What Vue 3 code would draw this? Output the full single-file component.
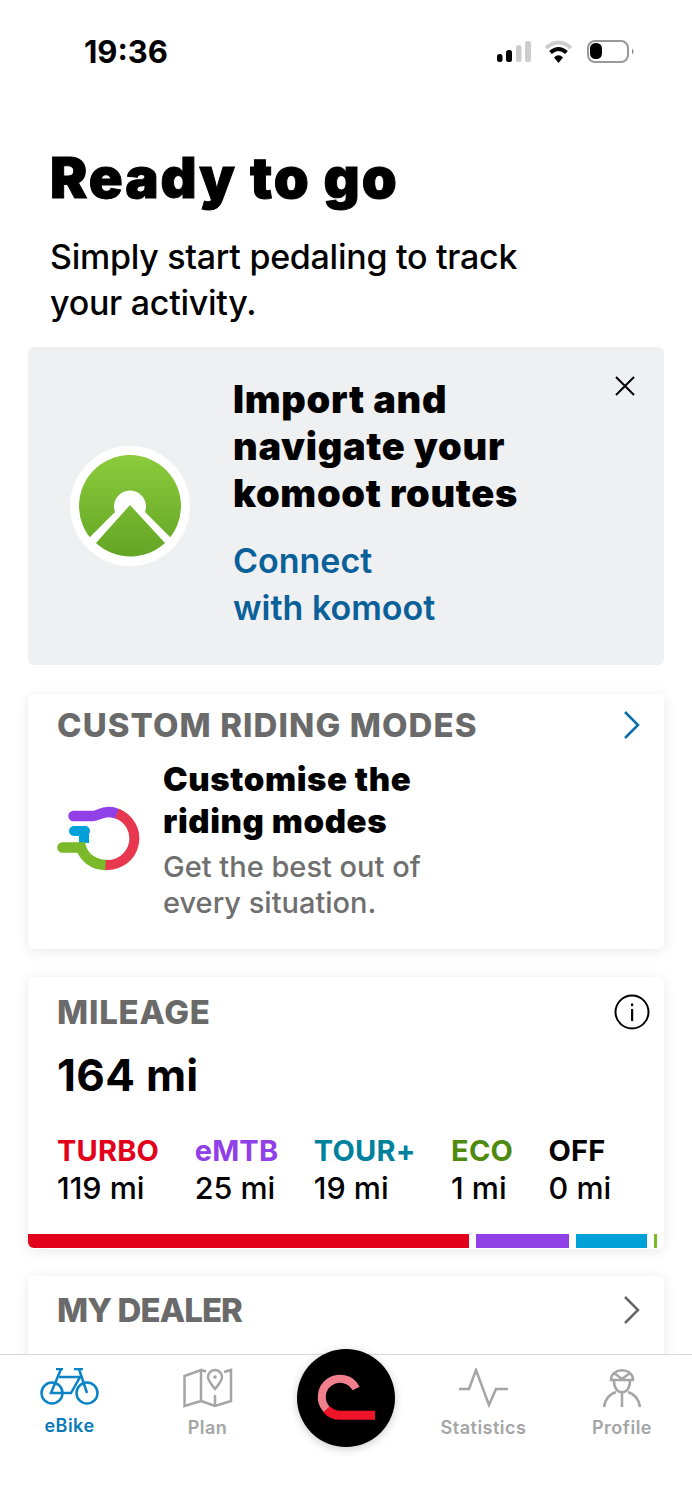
<script setup>
const modes = [
  { name: 'TURBO', value: '119 mi', color: '#e2001a' },
  { name: 'eMTB', value: '25 mi', color: '#9140e8' },
  { name: 'TOUR+', value: '19 mi', color: '#00829e' },
  { name: 'ECO', value: '1 mi', color: '#4f8a10' },
  { name: 'OFF', value: '0 mi', color: '#000' }
]
</script>

<template>
  <div class="page">
    <div class="status">
      <span class="time">19:36</span>
      <svg class="status-icons" width="140" height="28" viewBox="0 0 140 28">
        <rect x="1" y="16" width="5.500" height="8" rx="2.500" fill="#000" />
        <rect x="10" y="12" width="6" height="12" rx="2.500" fill="#000" />
        <rect x="20" y="7" width="5.500" height="17" rx="2.500" fill="#ccc" />
        <rect x="29" y="3" width="6" height="21" rx="2.500" fill="#ccc" />
        <path d="M50 10 Q62.500 -1 75 10" fill="none" stroke="#ccc" stroke-width="4" />
        <path d="M54.500 14.500 Q62.500 7.500 70.500 14.500" fill="none" stroke="#000" stroke-width="4" />
        <path d="M58 19.500 Q62.500 15 67 19.500 L62.500 25 Z" fill="#000" />
        <rect x="92" y="3" width="40" height="21" rx="7" fill="none" stroke="#999" stroke-width="2" />
        <rect x="94" y="5" width="12" height="16" rx="5.500" fill="#000" />
        <path d="M136 10.500 Q139 13.500 136 16.500 Z" fill="#888" />
      </svg>
    </div>

    <div class="scroll">
      <h1>Ready to go</h1>
      <p class="lead">Simply start pedaling to track<br>your activity.</p>

      <section class="komoot">
        <svg class="komoot-logo" width="120" height="120" viewBox="0 0 120 120">
          <defs>
            <linearGradient id="kg" gradientUnits="userSpaceOnUse" x1="0" y1="9" x2="0" y2="111">
              <stop offset="0" stop-color="#8ccb3c" />
              <stop offset="1" stop-color="#63a524" />
            </linearGradient>
          </defs>
          <circle cx="60" cy="60" r="60" fill="#fff" />
          <circle cx="60" cy="60" r="51" fill="url(#kg)" />
          <path d="M14 97 L45 66 A16 16 0 1 1 75 66 L106 97 L60 119 Z" fill="#fff" />
          <path d="M26 97 L60 59 L95 97 A51 51 0 0 1 26 97 Z" fill="url(#kg)" />
        </svg>
        <div class="komoot-text">
          <h2>Import and<br>navigate your<br>komoot routes</h2>
          <a class="connect">Connect<br>with komoot</a>
        </div>
        <svg class="close" width="22" height="22" viewBox="0 0 22 22">
          <path d="M2 2 L20 20 M20 2 L2 20" stroke="#000" stroke-width="2" />
        </svg>
      </section>

      <section class="card custom">
        <div class="card-head">
          <span class="label">CUSTOM RIDING MODES</span>
          <svg width="18" height="28" viewBox="0 0 18 28">
            <path d="M2 1 L15 14 L2 27" fill="none" stroke="#0a6fa8" stroke-width="2.500" />
          </svg>
        </div>
        <div class="custom-body">
          <svg class="modes-logo" width="84" height="70" viewBox="0 0 84 70" fill="none">
            <path d="M17 26 H28" stroke="#00a0d8" stroke-width="10" stroke-linecap="round" />
            <path d="M27 26 V38" stroke="#00a0d8" stroke-width="10" />
            <path d="M5.500 42.500 H24 C27 52 36 60 49 60" stroke="#7ab929" stroke-width="10.500" stroke-linecap="round" />
            <path d="M16.500 11 H36 C41 11 44 7 51.500 7 Q56 7 61 9" stroke="#9140e8" stroke-width="10.500" stroke-linecap="round" />
            <path d="M59.900 8.500 A26.500 26.500 0 0 1 48.600 59.800" stroke="#e8384f" stroke-width="10" />
          </svg>
          <div>
            <h3>Customise the<br>riding modes</h3>
            <p class="muted">Get the best out of<br>every situation.</p>
          </div>
        </div>
      </section>

      <section class="card mileage">
        <div class="card-head">
          <span class="label">MILEAGE</span>
          <svg width="36" height="36" viewBox="0 0 36 36">
            <circle cx="18" cy="18" r="16.500" fill="none" stroke="#000" stroke-width="2" />
            <rect x="17" y="15" width="2.200" height="12" fill="#000" />
            <rect x="17" y="9.500" width="2.200" height="2.600" fill="#000" />
          </svg>
        </div>
        <div class="total">164 mi</div>
        <div class="modes">
          <div v-for="m in modes" :key="m.name" class="mode">
            <span class="mode-name" :style="{ color: m.color }">{{ m.name }}</span>
            <span class="mode-value">{{ m.value }}</span>
          </div>
        </div>
        <div class="bar">
          <span class="seg red"></span>
          <span class="seg purple"></span>
          <span class="seg blue"></span>
          <span class="seg green"></span>
        </div>
      </section>

      <section class="card dealer">
        <div class="card-head">
          <span class="label">MY DEALER</span>
          <svg width="18" height="28" viewBox="0 0 18 28">
            <path d="M2 1 L15 14 L2 27" fill="none" stroke="#666" stroke-width="2.500" />
          </svg>
        </div>
      </section>
    </div>

    <nav class="tabs">
      <div class="tab active">
        <svg width="60" height="38" viewBox="0 0 60 38" fill="none" stroke="#0a84c6" stroke-width="2.500">
          <circle cx="12" cy="25" r="10.500" />
          <circle cx="47" cy="25" r="10.500" />
          <path d="M16 1 H23 M34 1 H43 M21 1 L11 25 H31 L40 9 H19 M39 1 L47 25" />
        </svg>
        <span>eBike</span>
      </div>
      <div class="tab">
        <svg width="50" height="40" viewBox="0 0 50 40" fill="none" stroke="#a5a5a5" stroke-width="2.500">
          <path d="M1.500 8 L18 2 V33 L1.500 38 Z M18 2 L23 3.500 M18 33 L32 38 L48 33 V2 L41 4 M32 27 V38" />
          <path d="M32 21 C27 15 25 12 25 9 A7 7 0 0 1 39 9 C39 12 37 15 32 21 Z" />
          <circle cx="32" cy="9" r="1.800" fill="#a5a5a5" stroke="none" />
        </svg>
        <span>Plan</span>
      </div>
      <div class="tab spacer"></div>
      <div class="tab">
        <svg width="50" height="40" viewBox="0 0 50 40" fill="none" stroke="#a5a5a5" stroke-width="2.500">
          <path d="M0 21 H10 L17 2 L30 37 L37 21 H49" />
        </svg>
        <span>Statistics</span>
      </div>
      <div class="tab">
        <svg width="38" height="40" viewBox="0 0 38 40" fill="none" stroke="#a5a5a5" stroke-width="2.500">
          <path d="M8 12 C8 -1 30 -1 30 12 Z M11 5 L19 11 L27 5" />
          <path d="M11 13 C11 28 27 28 27 13" />
          <path d="M1 39 C2 31 7 26 13 24 M37 39 C36 31 31 26 25 24 M19 25 V39" />
        </svg>
        <span>Profile</span>
      </div>
      <button class="fab" aria-label="Start">
        <svg width="98" height="98" viewBox="0 0 98 98" fill="none">
          <path d="M59.100 39.500 A18.200 18.200 0 1 0 29.700 60.400" stroke="#f2808c" stroke-width="8" />
          <path d="M29.700 60.400 A18.200 18.200 0 0 0 43 66.300 H78" stroke="#f01428" stroke-width="9" />
        </svg>
      </button>
    </nav>
  </div>
</template>

<style scoped>
.page {
  width: 692px;
  height: 1500px;
  display: flex;
  flex-direction: column;
  overflow: hidden;
  background: #fff;
  color: #000;
  font-family: Inter, "Liberation Sans", sans-serif;
}
.status {
  flex: none;
  height: 94px;
  padding: 0 56px 0 84px;
  display: flex;
  justify-content: space-between;
  align-items: flex-start;
}
.time {
  margin-top: 34px;
  font-size: 31px;
  line-height: 36px;
  font-weight: 700;
}
.status-icons {
  margin-top: 38px;
}
.scroll {
  flex: 1;
  min-height: 0;
  overflow: hidden;
}
h1 {
  margin: 50px 0 0 50px;
  font-size: 56px;
  line-height: 68px;
  font-weight: 900;
  letter-spacing: 1.900px;
  -webkit-text-stroke: 1px #000;
}
.lead {
  margin: 22px 0 0 50px;
  font-size: 34px;
  line-height: 46px;
  font-weight: 500;
  letter-spacing: -0.270px;
}
.komoot {
  position: relative;
  margin: 21px 28px 0;
  height: 318px;
  background: #eff0f2;
  border-radius: 6px;
  display: flex;
  align-items: center;
  padding-left: 42px;
  box-sizing: border-box;
}
.komoot-logo {
  flex: none;
}
.komoot-text {
  margin: 0 0 6px 43px;
}
h2 {
  margin: 0;
  font-size: 38px;
  line-height: 47px;
  font-weight: 900;
  letter-spacing: 0.700px;
}
.connect {
  display: block;
  margin-top: 20px;
  font-size: 34px;
  line-height: 47px;
  font-weight: 600;
  color: #0a6098;
}
.close {
  position: absolute;
  top: 28px;
  right: 28px;
}
.card {
  margin: 28px 28px 0;
  background: #fff;
  border-radius: 6px;
  box-shadow: 0 2px 14px rgba(0, 0, 0, 0.09);
}
.card-head {
  display: flex;
  justify-content: space-between;
  align-items: center;
  padding: 12px 23px 0 29px;
}
.label {
  font-size: 33px;
  line-height: 38px;
  font-weight: 800;
  letter-spacing: 0.800px;
  color: #6a6a6a;
}
.custom {
  margin-top: 29px;
  height: 255px;
}
.custom .label {
  letter-spacing: 1.100px;
}
.custom-body {
  display: flex;
  align-items: flex-start;
  padding-left: 29px;
}
.modes-logo {
  flex: none;
  margin: 61px 22px 0 0;
}
h3 {
  margin: 14px 0 0;
  font-size: 33px;
  line-height: 42px;
  font-weight: 900;
  letter-spacing: 0.600px;
}
.muted {
  margin: 7px 0 0;
  font-size: 29px;
  line-height: 36px;
  color: #6f6f6f;
  font-weight: 500;
}
.mileage {
  height: 272px;
  position: relative;
  overflow: hidden;
}
.mileage .card-head {
  padding-top: 16px;
  padding-right: 14px;
}
.total {
  padding-left: 29px;
  margin-top: 17px;
  font-size: 44px;
  line-height: 54px;
  font-weight: 700;
  letter-spacing: 0.300px;
}
.modes {
  display: flex;
  gap: 35.500px;
  padding-left: 29px;
  margin-top: 30px;
}
.mode {
  display: flex;
  flex-direction: column;
  font-size: 30.500px;
  line-height: 37px;
}
.mode-name {
  font-size: 29px;
  font-weight: 700;
  letter-spacing: 0.200px;
}
.mode-value {
  font-weight: 500;
}
.bar {
  position: absolute;
  left: 0;
  right: 0;
  bottom: 1px;
  height: 14px;
  display: flex;
  gap: 7px;
}
.seg {
  display: block;
}
.red {
  width: 441px;
  background: #e2001a;
  border-bottom-left-radius: 6px;
}
.purple {
  width: 93px;
  background: #9140e8;
}
.blue {
  width: 71px;
  background: #00a0d8;
}
.green {
  width: 3px;
  background: #7ab929;
}
.dealer {
  margin-top: 27px;
  height: 200px;
}
.dealer .card-head {
  padding-top: 15px;
}
.dealer .label {
  letter-spacing: -0.900px;
}
.tabs {
  flex: none;
  position: relative;
  height: 146px;
  border-top: 1px solid #d8d8d8;
  box-sizing: border-box;
  background: #fff;
  display: grid;
  grid-template-columns: 139px 137px 139px 137px 140px;
  align-items: start;
}
.tab {
  display: flex;
  flex-direction: column;
  align-items: center;
  padding-top: 13px;
  font-size: 18px;
  line-height: 22px;
  font-weight: 600;
  letter-spacing: 0.500px;
  color: #a5a5a5;
}
.tab svg {
  display: block;
  margin-bottom: 9px;
}
.tab.active {
  color: #0a7bb8;
}
.fab {
  position: absolute;
  left: 297px;
  top: -6px;
  width: 98px;
  height: 98px;
  padding: 0;
  border: 0;
  border-radius: 50%;
  background: #000;
  box-shadow: 0 2px 10px rgba(0, 0, 0, 0.2);
}
.fab svg {
  display: block;
}
</style>
